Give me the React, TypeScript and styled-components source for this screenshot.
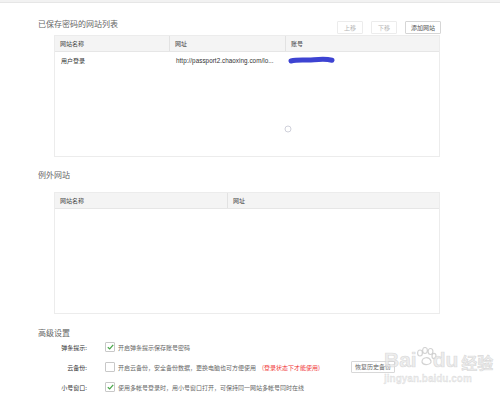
import styled, {createGlobalStyle} from 'styled-components'

const GlobalStyle = createGlobalStyle`
  html, body {
    margin: 0;
    padding: 0;
    background: #fff;
  }
  body {
    font-family: "Noto Sans CJK SC", "Liberation Sans", sans-serif;
    color: #333;
  }
`

interface Option {
  label: string
  text: string
  checked: boolean
  note?: string
  action?: string
}

const options: Option[] = [
  {label: '弹条提示:', text: '开启弹条提示保存账号密码', checked: true},
  {
    label: '云备份:',
    text: '开启云备份，安全备份数据，更换电脑也可方便使用',
    checked: false,
    note: '(登录状态下才能使用)',
    action: '恢复历史备份'
  },
  {label: '小号窗口:', text: '使用多帐号登录时，用小号窗口打开，可保持同一网站多帐号同时在线', checked: true}
]

function Check({checked}: {checked: boolean}) {
  return (
    <Box>
      {checked && (
        <svg width="7" height="6" viewBox="0 0 7 6">
          <path d="M0.8 3.2 L2.7 4.9 L6.2 0.9" fill="none" stroke="#4aa84a" strokeWidth="1.3" />
        </svg>
      )}
    </Box>
  )
}

export default function App() {
  return (
    <>
      <GlobalStyle />
      <Page>
        <TopStrip />
        <Content>
          <HeadRow>
            <Title>已保存密码的网站列表</Title>
            <Buttons>
              <SmallButton disabled>上移</SmallButton>
              <SmallButton disabled>下移</SmallButton>
              <SmallButton>添加网站</SmallButton>
            </Buttons>
          </HeadRow>
          <Table height={122}>
            <HeadGrid cols="115px 116px 1fr">
              <HeadCell>网站名称</HeadCell>
              <HeadCell>网址</HeadCell>
              <HeadCell last>账号</HeadCell>
            </HeadGrid>
            <RowGrid cols="115px 116px 1fr">
              <Cell>用户登录</Cell>
              <Cell url>http://passport2.chaoxing.com/lo...</Cell>
              <Cell>
                <svg width="48" height="9" viewBox="0 0 48 9">
                  <path d="M3 5 C10 3.2 18 4.6 26 3.8 C33 3 40 3.2 44 4.2" fill="none" stroke="#3d43d2" strokeWidth="5" strokeLinecap="round" />
                </svg>
              </Cell>
            </RowGrid>
            <Spinner>
              <svg width="8" height="8" viewBox="0 0 8 8">
                <circle cx="4" cy="4" r="3" fill="none" stroke="#c9cbd6" strokeWidth="0.9" />
              </svg>
            </Spinner>
          </Table>

          <Title gap={13}>例外网站</Title>
          <Table height={122} top={7}>
            <HeadGrid cols="173px 1fr">
              <HeadCell>网站名称</HeadCell>
              <HeadCell last>网址</HeadCell>
            </HeadGrid>
          </Table>

          <Title gap={14}>高级设置</Title>
          <Options>
            {options.map((o) => (
              <OptionRow key={o.label}>
                <Label>{o.label}</Label>
                <Check checked={o.checked} />
                <OptionText>{o.text}</OptionText>
                {o.note && <Note>{o.note}</Note>}
                {o.action && <ActionButton>{o.action}</ActionButton>}
              </OptionRow>
            ))}
          </Options>
        </Content>
        <Watermark>
          <Brand>
            <span>Bai</span>
            <Paw width="22" height="20" viewBox="0 0 22 20">
              <g fill="none" stroke="rgba(200,200,200,0.8)" strokeWidth="1.2">
                <ellipse cx="5" cy="6" rx="2.4" ry="3" />
                <ellipse cx="10" cy="3.5" rx="2.4" ry="3" />
                <ellipse cx="15.5" cy="4.5" rx="2.4" ry="3" />
                <ellipse cx="19" cy="9" rx="2" ry="2.6" />
                <path d="M7 15 C7 10 14 9 16 14 C17 18 8 19 7 15 Z" />
              </g>
            </Paw>
            <span>du</span>
            <Cn>经验</Cn>
          </Brand>
          <Site>jingyan.baidu.com</Site>
        </Watermark>
      </Page>
    </>
  )
}

const Page = styled.div`
  position: relative;
  width: 500px;
  height: 399px;
  overflow: hidden;
  background: #fff;
`

const TopStrip = styled.div`
  height: 2px;
  background: #f2f2f2;
  border-bottom: 1px solid #e6e6e6;
`

const Content = styled.div`
  display: flex;
  flex-direction: column;
  padding: 0 0 0 38px;
  width: 403px;
`

const HeadRow = styled.div`
  display: flex;
  justify-content: space-between;
  align-items: flex-end;
  margin-top: 16px;
`

const Title = styled.div<{gap?: number}>`
  font-size: 8px;
  line-height: 10px;
  color: #666;
  margin-top: ${({gap}) => gap ?? 0}px;
  margin-bottom: 5px;
`

const Buttons = styled.div`
  display: flex;
  gap: 8px;
`

const SmallButton = styled.button`
  font-family: inherit;
  font-size: 6px;
  line-height: 11px;
  height: 13px;
  padding: 0 6px;
  background: #fff;
  border: 1px solid ${({disabled}) => (disabled ? '#ececec' : '#d6d6d6')};
  border-radius: 1px;
  color: ${({disabled}) => (disabled ? '#b5b5b5' : '#555')};
  &:nth-child(3) {
    padding: 0 5px;
  }
`

const Table = styled.div<{height: number; top?: number}>`
  position: relative;
  margin-left: 16px;
  margin-top: ${({top}) => top ?? 1}px;
  width: 386px;
  height: ${({height}) => height}px;
  box-sizing: border-box;
  border: 1px solid #ececec;
  border-top: none;
`

const HeadGrid = styled.div<{cols: string}>`
  display: grid;
  grid-template-columns: ${({cols}) => cols};
  height: 15px;
  background: #f4f4f4;
  border-top: 1px solid #ececec;
  border-bottom: 1px solid #e6e6e6;
`

const HeadCell = styled.div<{last?: boolean}>`
  font-size: 6px;
  line-height: 15px;
  color: #444;
  padding-left: 5px;
  border-right: ${({last}) => (last ? 'none' : '1px solid #e2e2e2')};
`

const RowGrid = styled.div<{cols: string}>`
  display: grid;
  grid-template-columns: ${({cols}) => cols};
  height: 16px;
  align-items: center;
`

const Cell = styled.div<{url?: boolean}>`
  display: flex;
  align-items: center;
  font-size: 6px;
  color: #333;
  padding-left: 6px;
  font-family: ${({url}) => (url ? '"Liberation Sans", sans-serif' : 'inherit')};
  ${({url}) => (url ? 'font-size: 6.3px; letter-spacing: 0.05px;' : '')}
  svg {
    margin-left: -4px;
  }
`

const Spinner = styled.div`
  position: absolute;
  left: 229px;
  top: 90px;
  line-height: 0;
`

const Options = styled.div`
  display: flex;
  flex-direction: column;
  margin-top: -6px;
`

const OptionRow = styled.div`
  display: flex;
  align-items: center;
  height: 20px;
`

const Label = styled.div`
  width: 49px;
  text-align: right;
  font-size: 6px;
  color: #333;
  margin-right: 18px;
`

const Box = styled.div`
  width: 8px;
  height: 8px;
  border: 1px solid #c8c8c8;
  border-radius: 1px;
  display: flex;
  align-items: center;
  justify-content: center;
  background: #fff;
  margin-right: 3px;
`

const OptionText = styled.div`
  font-size: 6px;
  color: #666;
  white-space: nowrap;
`

const Note = styled.div`
  font-size: 6px;
  color: #f03a3a;
  margin-left: 6px;
  white-space: nowrap;
`

const ActionButton = styled.button`
  font-family: inherit;
  font-size: 6px;
  height: 12px;
  line-height: 10px;
  padding: 0 3px;
  margin-left: 31px;
  background: #fff;
  border: 1px solid #d8d8d8;
  border-radius: 1px;
  color: #666;
  white-space: nowrap;
`

const Watermark = styled.div`
  position: absolute;
  left: 384px;
  top: 347px;
  display: flex;
  flex-direction: column;
  align-items: flex-start;
  pointer-events: none;
  white-space: nowrap;
  color: rgba(232, 232, 232, 0.8);
`

const Brand = styled.div`
  font-family: "Liberation Sans", sans-serif;
  font-size: 21px;
  font-weight: bold;
  line-height: 26px;
  display: flex;
  align-items: flex-end;
  -webkit-text-stroke: 0.6px rgba(195, 195, 195, 0.55);
`

const Paw = styled.svg`
  align-self: flex-start;
  margin: 0 -4px 0 -2px;
`

const Cn = styled.span`
  font-family: "Noto Sans CJK SC", sans-serif;
  font-size: 16px;
  line-height: 22px;
  margin-left: 3px;
`

const Site = styled.div`
  font-family: "Liberation Sans", sans-serif;
  font-size: 10px;
  font-weight: bold;
  line-height: 12px;
  -webkit-text-stroke: 0.3px rgba(195, 195, 195, 0.55);
`
